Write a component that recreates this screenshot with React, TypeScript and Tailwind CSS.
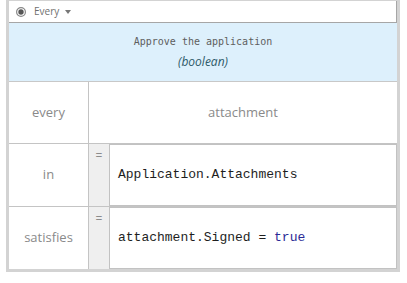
import React from 'react';

const sans = { fontFamily: '"Open Sans", "Noto Sans", sans-serif' };

const Radio = () => (
  <svg width="10" height="10" viewBox="0 0 10 10">
    <circle cx="5" cy="5" r="4.4" fill="#fff" stroke="#888" strokeWidth="1.2" />
    <circle cx="5" cy="5" r="2.7" fill="#555" />
  </svg>
);

const Caret = () => (
  <svg width="6" height="4" viewBox="0 0 6 4">
    <path d="M0 0 L6 0 L3 4 Z" fill="#777" />
  </svg>
);

type ExprRowProps = {
  label: string;
  children: React.ReactNode;
  last?: boolean;
};

const ExprRow: React.FC<ExprRowProps> = ({ label, children, last }) => (
  <div className={`flex ${last ? 'h-[62px]' : 'h-[63px] border-b border-[#c4c4c4]'}`}>
    <div
      className="w-[80px] shrink-0 border-r border-[#c4c4c4] flex items-center justify-center text-[13px] text-[#8a8a8a]"
      style={sans}
    >
      {label}
    </div>
    <div
      className="w-[20px] shrink-0 bg-[#efefef] flex justify-center pt-[4px] text-[12px] leading-[15px] text-[#8c8c8c]"
      style={sans}
    >
      =
    </div>
    <div
      className="flex-1 border border-[#c2c2c2] flex items-center pl-[8px] text-[13px] text-[#1e1e1e]"
      style={{ fontFamily: '"Liberation Mono", "Courier New", monospace' }}
    >
      {children}
    </div>
  </div>
);

export default function App() {
  return (
    <div className="w-[407px] h-[283px] bg-white">
      <div className="ml-[6px] w-[394px] border-x-[3px] border-b-[3px] border-t border-[#d3d3d3] bg-white">
        {/* Toolbar */}
        <div className="h-[22px] flex items-center border-b border-r border-[#a6a6a6] pl-[7px]">
          <Radio />
          <span className="ml-[8px] text-[10px] text-[#707070]" style={sans}>
            Every
          </span>
          <span className="ml-[6px] flex items-center">
            <Caret />
          </span>
        </div>

        {/* Header */}
        <div className="h-[59px] bg-[#ddf0fc] border-b border-[#c8c8c8] flex flex-col items-center justify-center gap-[5px]">
          <div
            className="text-[10px] leading-[14px] text-[#5e5e5e]"
            style={{ fontFamily: '"DejaVu Sans Mono", monospace' }}
          >
            Approve the application
          </div>
          <div className="text-[12px] leading-[15px] italic text-[#2e5a69]" style={sans}>
            (boolean)
          </div>
        </div>

        {/* every / attachment */}
        <div className="flex h-[62px] border-b border-[#c4c4c4]">
          <div
            className="w-[80px] shrink-0 border-r border-[#c4c4c4] flex items-center justify-center text-[13px] text-[#8a8a8a]"
            style={sans}
          >
            every
          </div>
          <div className="flex-1 flex items-center justify-center text-[13px] text-[#8a8a8a]" style={sans}>
            attachment
          </div>
        </div>

        <ExprRow label="in">Application.Attachments</ExprRow>
        <ExprRow label="satisfies" last>
          <span>
            attachment.Signed = <span className="text-[#2a2a96]">true</span>
          </span>
        </ExprRow>
      </div>
    </div>
  );
}
